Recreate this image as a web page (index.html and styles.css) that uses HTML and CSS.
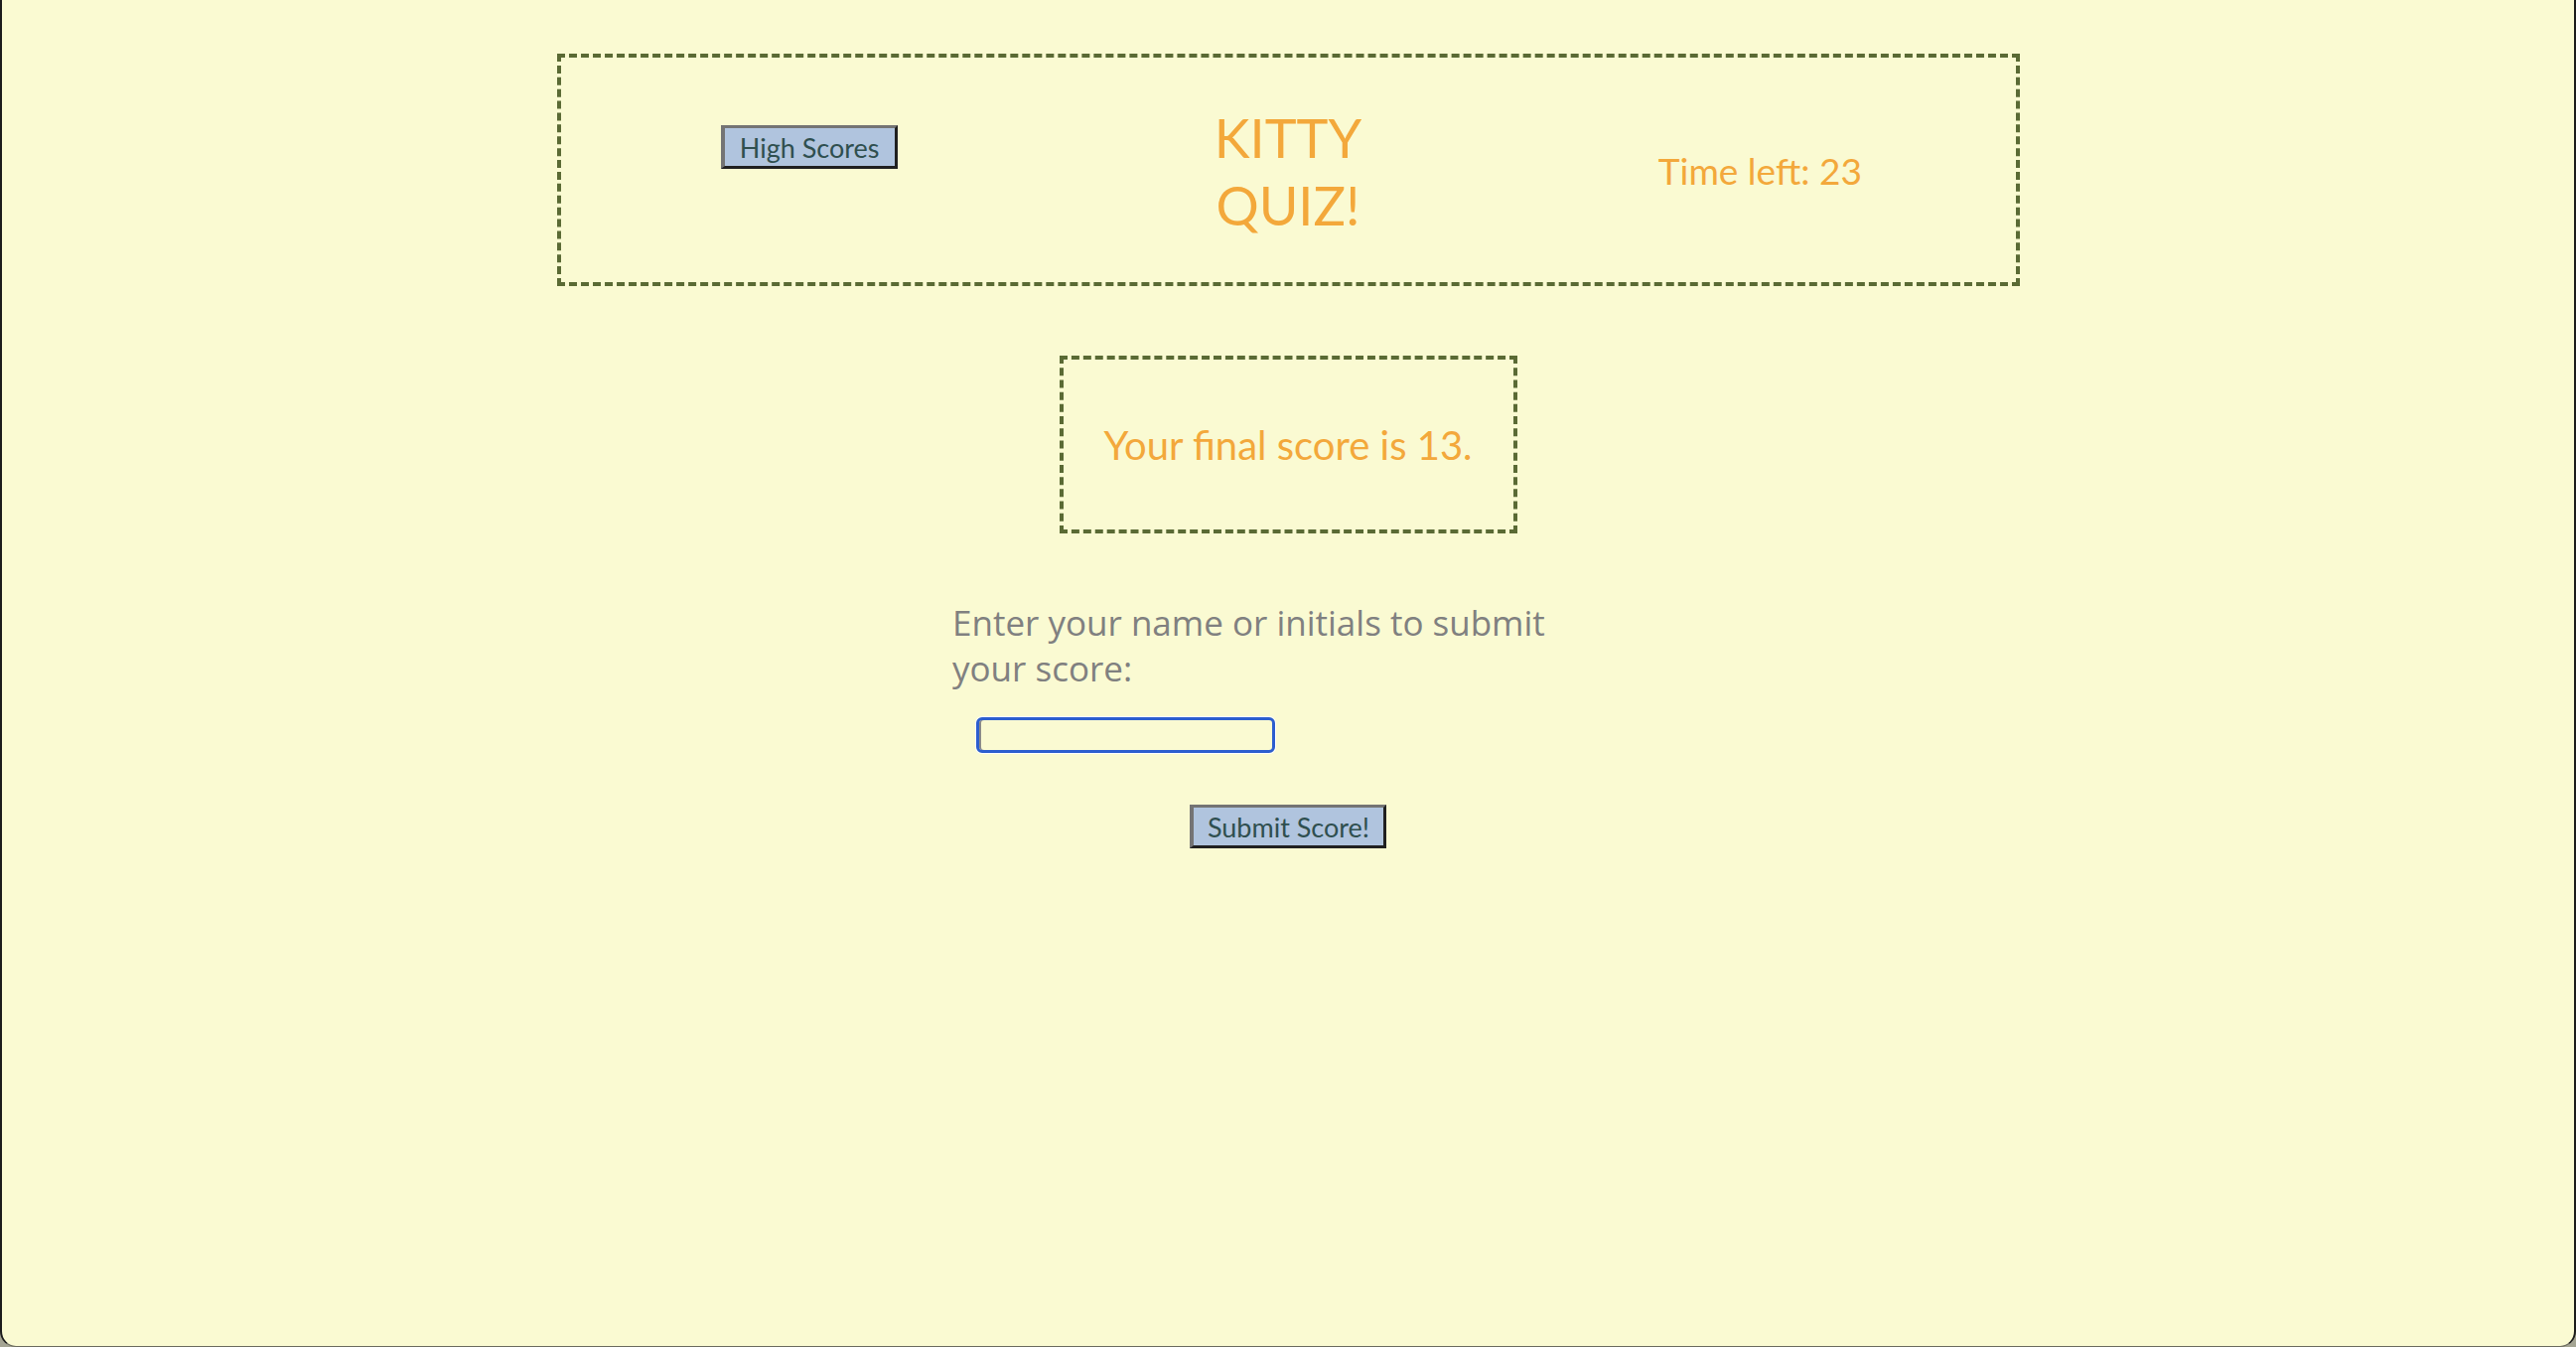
FILE: index.html
```html
<!DOCTYPE html>
<html lang="en">
<head>
<meta charset="utf-8">
<title>Kitty Quiz</title>
<link rel="stylesheet" href="styles.css">
</head>
<body>
<div class="window">
  <header class="header">
    <div class="col col-left"><button class="btn btn-high">High Scores</button></div>
    <div class="col col-mid"><h1 class="title">KITTY QUIZ!</h1></div>
    <div class="col col-right"><p class="timer">Time left: 23</p></div>
  </header>
  <section class="score-box">
    <p class="score-text">Your final score is 13.</p>
  </section>
  <form class="form">
    <label class="label" for="initials">Enter your name or initials to submit your score:</label>
    <div class="input-row"><input class="initials" id="initials" type="text"></div>
    <div class="submit-row"><button type="button" class="btn btn-submit">Submit Score!</button></div>
  </form>
</div>
</body>
</html>
```
FILE: styles.css
```css
html {
  background: #a4a493;
}
body {
  margin: 0;
  font-family: Lato, "Open Sans", sans-serif;
}
.window {
  box-sizing: border-box;
  height: 100vh;
  background: #fafad2;
  border-left: 2px solid #1c1c1c;
  border-right: 2px solid #1c1c1c;
  border-bottom: 1px solid #6a6a5e;
  border-radius: 0 0 16px 16px;
  padding-top: 54px;
}
.header {
  box-sizing: border-box;
  width: 1473px;
  height: 234px;
  margin: 0 auto;
  border: 4px dashed #5a6a34;
  display: grid;
  grid-template-columns: 1fr 1fr 1fr;
  align-items: center;
}
.col {
  display: flex;
  justify-content: center;
}
.col-left {
  padding-left: 12px;
  margin-bottom: 46px;
}
.col-right {
  padding-right: 26px;
}
.btn {
  font-family: Lato, "Open Sans", sans-serif;
  font-size: 27px;
  color: #2f4f4f;
  background: #b0c4de;
  border-style: solid;
  border-width: 3px 3px 3px 4px;
  border-color: #747474 #202020 #202020 #747474;
  padding: 0;
  box-sizing: border-box;
  cursor: pointer;
}
.btn-high {
  width: 178px;
  height: 44px;
}
.title {
  margin: 0;
  width: 160px;
  text-align: center;
  font-size: 54px;
  font-weight: 400;
  line-height: 68px;
  color: #f3a83b;
  margin-top: 4px;
}
.timer {
  margin: 0;
  font-size: 37px;
  color: #f3a83b;
}
.score-box {
  box-sizing: border-box;
  width: 461px;
  height: 179px;
  margin: 70px auto 0;
  border: 4px dashed #5a6a34;
  display: flex;
  align-items: center;
  justify-content: center;
}
.score-text {
  margin: 0;
  font-size: 40px;
  color: #f3a83b;
}
.form {
  width: 676px;
  margin: 67px auto 0;
}
.label {
  display: block;
  max-width: 650px;
  font-family: "Open Sans", Lato, sans-serif;
  font-size: 35px;
  line-height: 46px;
  color: #808080;
}
.input-row {
  padding-left: 24px;
  margin-top: 26px;
  display: flex;
}
.initials {
  box-sizing: border-box;
  width: 301px;
  height: 36px;
  background: transparent;
  border: 3px solid #2c5ecf;
  border-radius: 6px;
  box-shadow: 0 0 0 1px #ffffff, inset 2px 0 0 #8a8a8a;
  margin: 0;
  padding: 0;
  outline: none;
}
.submit-row {
  display: flex;
  justify-content: center;
  width: 100%;
  margin-top: 52px;
}
.btn-submit {
  width: 198px;
  height: 44px;
}
```
